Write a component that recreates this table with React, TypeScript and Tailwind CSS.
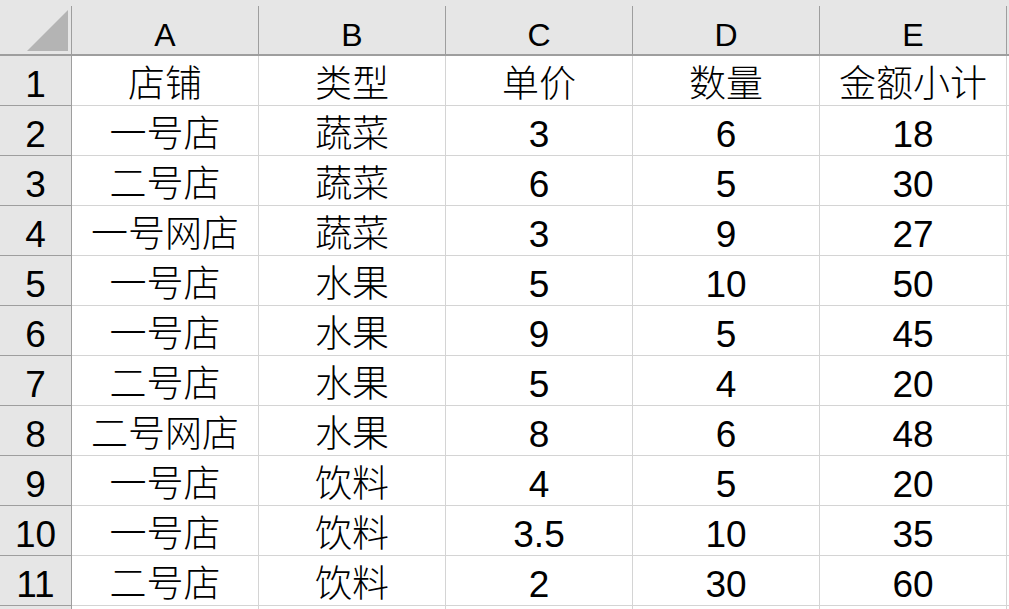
import React from 'react';

const columns = ['A', 'B', 'C', 'D', 'E'];

const rows: string[][] = [
  ['店铺', '类型', '单价', '数量', '金额小计'],
  ['一号店', '蔬菜', '3', '6', '18'],
  ['二号店', '蔬菜', '6', '5', '30'],
  ['一号网店', '蔬菜', '3', '9', '27'],
  ['一号店', '水果', '5', '10', '50'],
  ['一号店', '水果', '9', '5', '45'],
  ['二号店', '水果', '5', '4', '20'],
  ['二号网店', '水果', '8', '6', '48'],
  ['一号店', '饮料', '4', '5', '20'],
  ['一号店', '饮料', '3.5', '10', '35'],
  ['二号店', '饮料', '2', '30', '60'],
];

const font = { fontFamily: '"Liberation Sans", "Noto Sans CJK SC", sans-serif' };

export default function App() {
  return (
    <div className="w-[1009px] h-[609px] overflow-hidden bg-white text-black font-light" style={font}>
      {/* Column headers */}
      <div className="grid grid-cols-[72px_repeat(5,187px)_1fr] h-[56px] bg-[#e6e6e6] pt-[6px] border-b-2 border-[#9e9e9e]">
        <div className="flex items-end justify-end pr-[3px] pb-[3px] border-r border-[#9e9e9e]">
          <svg width="41" height="41" viewBox="0 0 41 41">
            <polygon points="41,0 41,41 0,41" fill="#b4b4b4" />
          </svg>
        </div>
        {columns.map((c) => (
          <div key={c} className="flex items-center justify-center pt-[10px] text-[32px] leading-none border-r border-[#9e9e9e]">
            {c}
          </div>
        ))}
        <div />
      </div>

      {/* Rows */}
      {rows.map((r, i) => (
        <div key={i} className="grid grid-cols-[72px_repeat(5,187px)_1fr] h-[50px]">
          <div className="flex items-center justify-center pt-[7px] bg-[#e6e6e6] text-[37px] leading-none border-r border-b border-[#9e9e9e]">
            {i + 1}
          </div>
          {r.map((v, j) => (
            <div key={j} className="flex items-center justify-center pt-[8px] text-[37px] leading-none whitespace-nowrap border-r border-b border-[#d4d4d4]">
              {v}
            </div>
          ))}
          <div className="border-b border-[#d4d4d4]" />
        </div>
      ))}

      {/* Partly visible next row */}
      <div className="grid grid-cols-[72px_repeat(5,187px)_1fr] h-[50px]">
        <div className="bg-[#e6e6e6] border-r border-[#9e9e9e]" />
        {columns.map((c) => (
          <div key={c} className="border-r border-[#d4d4d4]" />
        ))}
        <div />
      </div>
    </div>
  );
}
